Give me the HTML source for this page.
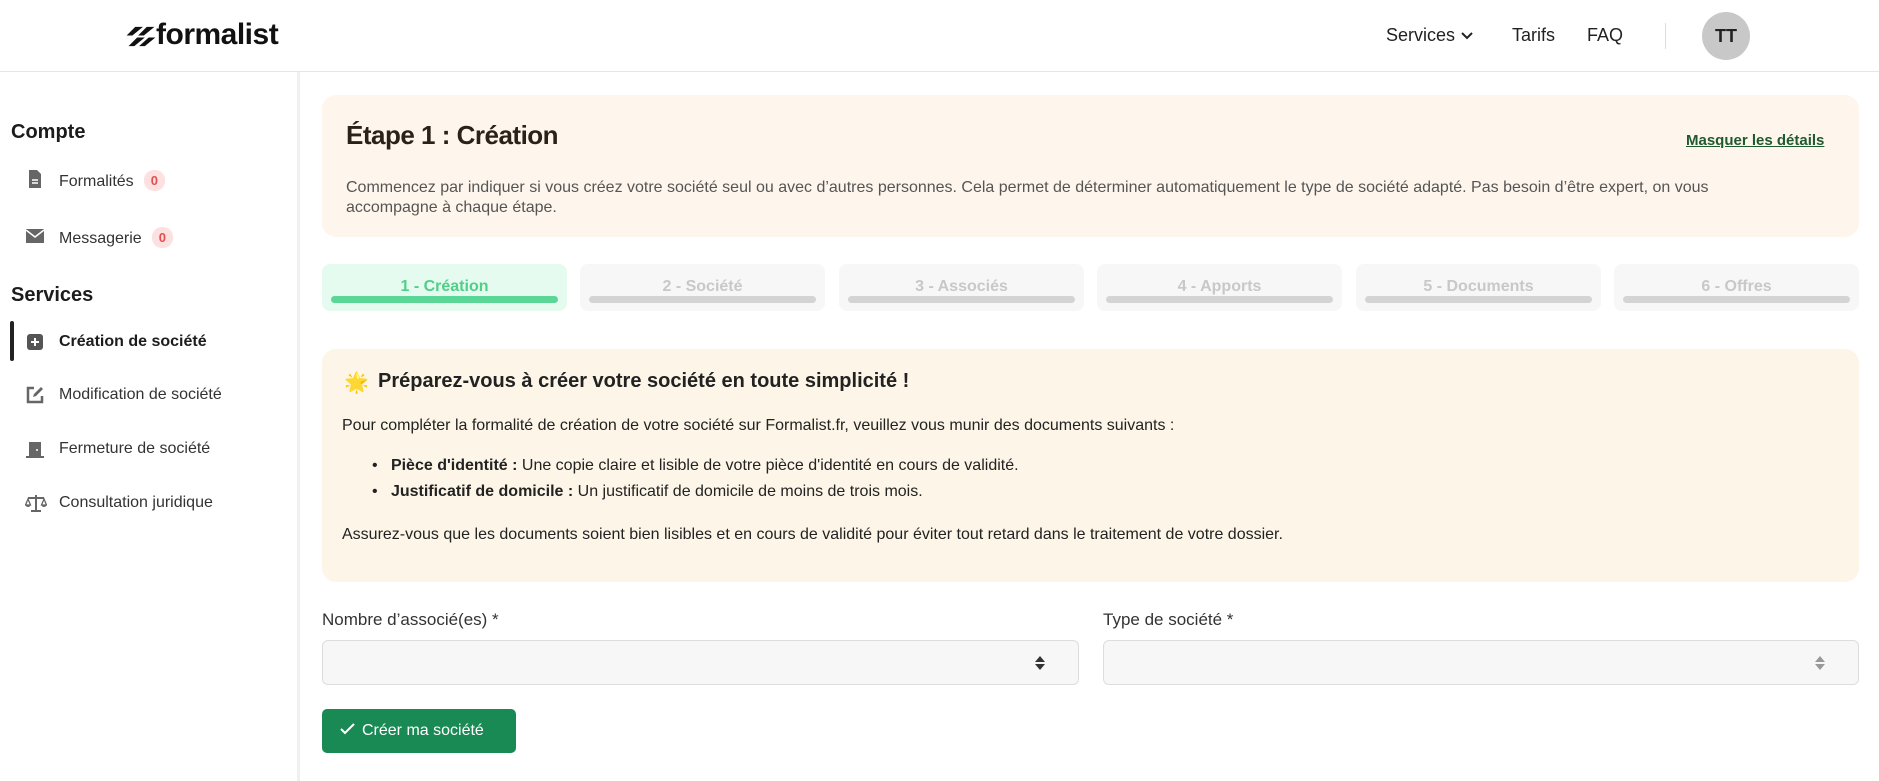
<!DOCTYPE html>
<html><head><meta charset="utf-8"><style>
*{box-sizing:border-box;margin:0;padding:0}
body{width:1879px;height:781px;overflow:hidden;background:#fff;font-family:"Liberation Sans",sans-serif;color:#222;position:relative}
.a{position:absolute;white-space:nowrap}
.hdr{position:absolute;left:0;top:0;width:1879px;height:72px;border-bottom:1px solid #e6e6e6}
.side{position:absolute;left:0;top:72px;width:300px;height:709px;border-right:3px solid #f0f0f0}
.sh{font-size:20px;font-weight:bold;color:#1c1c1c}
.it{font-size:16px;color:#333;left:59px}
.ic{left:25px;width:20px;height:20px}
.badge{display:inline-block;background:#fde0e0;color:#e05050;font-size:13px;font-weight:bold;border-radius:10px;padding:3px 7px;margin-left:10px;vertical-align:1px}
.tab{position:absolute;top:264px;width:245px;height:47px;border-radius:8px;background:#f7f7f7;text-align:center;font-size:16px;font-weight:bold;color:#c8c8c8;padding-top:14px}
.tab i{position:absolute;left:9px;right:9px;bottom:8px;height:7px;border-radius:4px;background:#d4d4d4}
.sel{position:absolute;top:640px;height:45px;background:#f7f7f7;border:1px solid #ddd;border-radius:6px}
.lbl{font-size:17px;color:#333;top:610px}
</style></head><body>
<div class="hdr"></div>
<svg class="a" style="left:126px;top:25px" width="30" height="23" viewBox="0 0 30 24"><path d="M9 2h8L6 11H0zM21 2h8L18 11h-6zM11 13h8L8 22H2zM23 13h7l-11 9h-6z" fill="#111"/></svg>
<div class="a" style="left:156px;top:18px;font-size:30px;font-weight:bold;letter-spacing:-0.5px;color:#111">formalist</div>
<div class="a" style="left:1386px;top:25px;font-size:18px;color:#222">Services <svg width="14" height="10" viewBox="0 0 14 10"><path d="M2 2l5 5 5-5" stroke="#222" stroke-width="2" fill="none"/></svg></div>
<div class="a" style="left:1512px;top:25px;font-size:18px">Tarifs</div>
<div class="a" style="left:1587px;top:25px;font-size:18px">FAQ</div>
<div class="a" style="left:1665px;top:23px;width:1px;height:26px;background:#ddd"></div>
<div class="a" style="left:1702px;top:12px;width:48px;height:48px;border-radius:50%;background:#c8c8c8;text-align:center;line-height:48px;font-weight:bold;font-size:18px;color:#222">TT</div>

<div class="side"></div>
<div class="a sh" style="left:11px;top:121px">Compte</div>
<div class="a ic" style="top:168px"><svg width="20" height="22" viewBox="0 0 20 22"><path d="M4 2h8l4 4v14H4z" fill="#666"/><path d="M7 12h6M7 15h6" stroke="#fff" stroke-width="1.5"/></svg></div>
<div class="a it" style="top:170px">Formalités<span class="badge">0</span></div>
<div class="a ic" style="top:227px"><svg width="20" height="18" viewBox="0 0 20 18"><rect x="1" y="2" width="18" height="14" fill="#666"/><path d="M1 3l9 7 9-7" stroke="#fff" stroke-width="1.5" fill="none"/></svg></div>
<div class="a it" style="top:227px">Messagerie<span class="badge">0</span></div>
<div class="a sh" style="left:11px;top:284px">Services</div>
<div class="a" style="left:10px;top:321px;width:4px;height:40px;background:#222;border-radius:2px"></div>
<div class="a ic" style="top:332px"><svg width="20" height="20" viewBox="0 0 20 20"><rect x="2" y="2" width="16" height="16" rx="3" fill="#555"/><path d="M10 6v8M6 10h8" stroke="#fff" stroke-width="2"/></svg></div>
<div class="a it" style="top:333px;font-weight:bold;color:#1c1c1c">Création de société</div>
<div class="a ic" style="top:385px"><svg width="20" height="20" viewBox="0 0 20 20"><path d="M9 3H3v14h14v-6" stroke="#666" stroke-width="2.5" fill="none"/><path d="M8 12l1-3 7-7 2 2-7 7z" fill="#666"/></svg></div>
<div class="a it" style="top:386px">Modification de société</div>
<div class="a ic" style="top:439px"><svg width="20" height="20" viewBox="0 0 20 20"><path d="M4 18V3h12v15z" fill="#666"/><rect x="1" y="17" width="18" height="2" fill="#666"/><circle cx="12" cy="11" r="1" fill="#fff"/></svg></div>
<div class="a it" style="top:440px">Fermeture de société</div>
<div class="a ic" style="top:493px"><svg width="22" height="20" viewBox="0 0 22 20"><path d="M11 2v15M3 5h16M6 18h10" stroke="#666" stroke-width="2"/><path d="M3 6l-2.5 6h5zM19 6l-2.5 6h5z" stroke="#666" stroke-width="1.3" fill="none"/><path d="M0.5 12a2.5 2 0 0 0 5 0zM16.5 12a2.5 2 0 0 0 5 0z" fill="#666"/></svg></div>
<div class="a it" style="top:494px">Consultation juridique</div>

<div class="a" style="left:322px;top:95px;width:1537px;height:142px;background:#fef6ec;border-radius:14px"></div>
<div class="a" style="left:346px;top:120px;font-size:26px;font-weight:bold;color:#2a2218;letter-spacing:-0.5px">Étape 1 : Création</div>
<div class="a" style="left:1686px;top:132px;font-size:15px;font-weight:bold;color:#1f5a2e;text-decoration:underline">Masquer les détails</div>
<div class="a" style="left:346px;top:178px;font-size:16px;color:#555;line-height:20px">Commencez par indiquer si vous créez votre société seul ou avec d’autres personnes. Cela permet de déterminer automatiquement le type de société adapté. Pas besoin d’être expert, on vous<br>accompagne à chaque étape.</div>

<div class="tab" style="left:322px;background:#e6fbef;color:#4fcf88">1 - Création<i style="background:#5ad797"></i></div>
<div class="tab" style="left:580px">2 - Société<i></i></div>
<div class="tab" style="left:839px">3 - Associés<i></i></div>
<div class="tab" style="left:1097px">4 - Apports<i></i></div>
<div class="tab" style="left:1356px">5 - Documents<i></i></div>
<div class="tab" style="left:1614px">6 - Offres<i></i></div>

<div class="a" style="left:322px;top:349px;width:1537px;height:233px;background:#fdf6e8;border-radius:14px"></div>
<div class="a" style="left:344px;top:370px;font-size:20px">🌟</div>
<div class="a" style="left:378px;top:370px;font-size:20px;font-weight:bold;color:#222">Préparez-vous à créer votre société en toute simplicité !</div>
<div class="a" style="left:342px;top:417px;font-size:16px;color:#222">Pour compléter la formalité de création de votre société sur Formalist.fr, veuillez vous munir des documents suivants :</div>
<div class="a" style="left:372px;top:457px;font-size:16px;color:#222">•&nbsp;&nbsp;&nbsp;<b>Pièce d'identité :</b> Une copie claire et lisible de votre pièce d'identité en cours de validité.</div>
<div class="a" style="left:372px;top:483px;font-size:16px;color:#222">•&nbsp;&nbsp;&nbsp;<b>Justificatif de domicile :</b> Un justificatif de domicile de moins de trois mois.</div>
<div class="a" style="left:342px;top:526px;font-size:16px;color:#222">Assurez-vous que les documents soient bien lisibles et en cours de validité pour éviter tout retard dans le traitement de votre dossier.</div>

<div class="a lbl" style="left:322px">Nombre d’associé(es) *</div>
<div class="a lbl" style="left:1103px">Type de société *</div>
<div class="sel" style="left:322px;width:757px"><svg style="position:absolute;right:32px;top:14px" width="12" height="16" viewBox="0 0 12 16"><path d="M6 1l5 6H1zM6 15l5-6H1z" fill="#333"/></svg></div>
<div class="sel" style="left:1103px;width:756px"><svg style="position:absolute;right:32px;top:14px" width="12" height="16" viewBox="0 0 12 16"><path d="M6 1l5 6H1zM6 15l5-6H1z" fill="#999"/></svg></div>

<div class="a" style="left:322px;top:709px;width:194px;height:44px;background:#1a8a55;border-radius:5px;color:#fff;font-size:16px;padding:13px 0 0 18px"><svg width="16" height="12" viewBox="0 0 16 12" style="margin-right:6px"><path d="M1 6l4 4 9-9" stroke="#fff" stroke-width="2" fill="none"/></svg>Créer ma société</div>
</body></html>
